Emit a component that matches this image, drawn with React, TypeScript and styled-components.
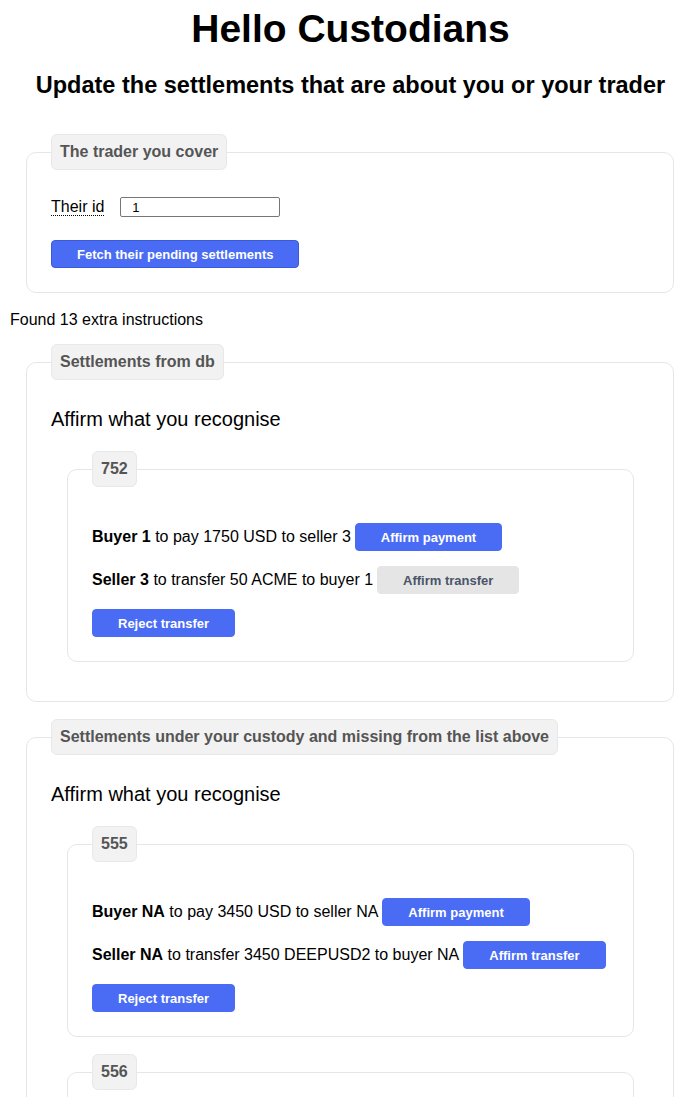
import React from "react";
import styled, { createGlobalStyle } from "styled-components";

const Global = createGlobalStyle`
  html, body { margin: 0; padding: 0; background: #fff; }
  body { font-family: "Liberation Sans", Arial, Helvetica, sans-serif; color: #000; }
  * { box-sizing: border-box; }
`;

const Page = styled.div`
  padding: 0 8px 40px;
`;

const Header = styled.header`
  padding-left: 11px;
  text-align: center;
`;

const Title = styled.h1`
  margin: 6px 0 0;
  font-size: 39px;
  line-height: 46px;
  font-weight: 700;
`;

const Subtitle = styled.h2`
  margin: 19px 0 0;
  font-size: 23.5px;
  line-height: 28px;
  font-weight: 700;
`;

const Fieldset = styled.fieldset<{ $inner?: boolean }>`
  margin: ${(p) => (p.$inner ? "0 15px 0 16px" : "0 8px 0 18px")};
  padding: 0 24px 24px;
  border: 1px solid #e6e6e6;
  border-radius: 10px;
  min-width: 0;
`;

const Legend = styled.legend`
  padding: 8px 8px;
  margin: 0;
  background: #f2f2f2;
  border: 1px solid #e8e8e8;
  border-radius: 6px;
  font-size: 16px;
  line-height: 18px;
  font-weight: 700;
  color: #555;
`;

const TraderSection = styled(Fieldset)`
  margin-top: 35px;
`;

const IdRow = styled.div`
  display: flex;
  align-items: center;
  gap: 16px;
  margin-top: 27px;
  height: 20px;
`;

const Label = styled.label`
  font-size: 16px;
  line-height: 18px;
  text-decoration: underline dotted;
  text-underline-offset: 3px;
  text-decoration-thickness: 1px;
`;

const IdInput = styled.input`
  width: 160px;
  height: 20px;
  border: 1px solid #767676;
  border-radius: 2px;
  padding: 0 11px;
  font-family: "Liberation Sans", Arial, sans-serif;
  font-size: 13px;
  color: #000;
`;

const Button = styled.button<{ $disabled?: boolean }>`
  flex: none;
  height: 28px;
  padding: 0 25px;
  border-radius: 4px;
  border: 1px solid ${(p) => (p.$disabled ? "#e5e5e5" : "#4a6cf5")};
  background: ${(p) => (p.$disabled ? "#e5e5e5" : "#4a6cf5")};
  color: ${(p) => (p.$disabled ? "#4a5568" : "#fff")};
  font-family: "Liberation Sans", Arial, sans-serif;
  font-size: 13px;
  font-weight: 700;
  white-space: nowrap;
  cursor: pointer;
`;

const FetchButton = styled(Button)`
  display: block;
  margin-top: 23px;
  border-color: #3a5bd8;
`;

const Found = styled.p`
  margin: 17px 0 0 2px;
  font-size: 16px;
  line-height: 19px;
`;

const Section = styled(Fieldset)`
  margin-top: 15px;
  padding-bottom: 39px;
  & + & {
    margin-top: 17px;
  }
`;

const Intro = styled.p`
  margin: 27px 0 20px;
  font-size: 20px;
  line-height: 24px;
`;

const List = styled.div`
  display: flex;
  flex-direction: column;
  gap: 17px;
`;

const Lines = styled.div`
  display: flex;
  flex-direction: column;
  align-items: flex-start;
  gap: 15px;
  padding-top: 36px;
`;

const Line = styled.div`
  display: flex;
  align-items: center;
  gap: 4px;
  height: 28px;
  font-size: 16px;
  line-height: 18px;
  white-space: nowrap;
`;

const Party = styled.b`
  font-weight: 700;
`;

type Settlement = {
  id: string;
  buyer: string;
  seller: string;
  amount: string;
  qty: string;
  asset: string;
  transferDisabled?: boolean;
};

const fromDb: Settlement[] = [
  { id: "752", buyer: "1", seller: "3", amount: "1750", qty: "50", asset: "ACME", transferDisabled: true },
];

const custody: Settlement[] = [
  { id: "555", buyer: "NA", seller: "NA", amount: "3450", qty: "3450", asset: "DEEPUSD2" },
  { id: "556", buyer: "NA", seller: "NA", amount: "3450", qty: "3450", asset: "DEEPUSD2" },
];

function SettlementCard({ s }: { s: Settlement }) {
  return (
    <Fieldset $inner>
      <Legend>{s.id}</Legend>
      <Lines>
        <Line>
          <span>
            <Party>Buyer {s.buyer}</Party> to pay {s.amount} USD to seller {s.seller}
          </span>
          <Button>Affirm payment</Button>
        </Line>
        <Line>
          <span>
            <Party>Seller {s.seller}</Party> to transfer {s.qty} {s.asset} to buyer {s.buyer}
          </span>
          <Button $disabled={s.transferDisabled}>Affirm transfer</Button>
        </Line>
        <Button>Reject transfer</Button>
      </Lines>
    </Fieldset>
  );
}

export default function App() {
  return (
    <Page>
      <Global />
      <Header>
        <Title>Hello Custodians</Title>
        <Subtitle>Update the settlements that are about you or your trader</Subtitle>
      </Header>
      <TraderSection>
        <Legend>The trader you cover</Legend>
        <IdRow>
          <Label htmlFor="tid">Their id</Label>
          <IdInput id="tid" defaultValue="1" />
        </IdRow>
        <FetchButton>Fetch their pending settlements</FetchButton>
      </TraderSection>
      <Found>Found 13 extra instructions</Found>
      <Section>
        <Legend>Settlements from db</Legend>
        <Intro>Affirm what you recognise</Intro>
        <List>
          {fromDb.map((s) => (
            <SettlementCard key={s.id} s={s} />
          ))}
        </List>
      </Section>
      <Section>
        <Legend>Settlements under your custody and missing from the list above</Legend>
        <Intro>Affirm what you recognise</Intro>
        <List>
          {custody.map((s) => (
            <SettlementCard key={s.id} s={s} />
          ))}
        </List>
      </Section>
    </Page>
  );
}
